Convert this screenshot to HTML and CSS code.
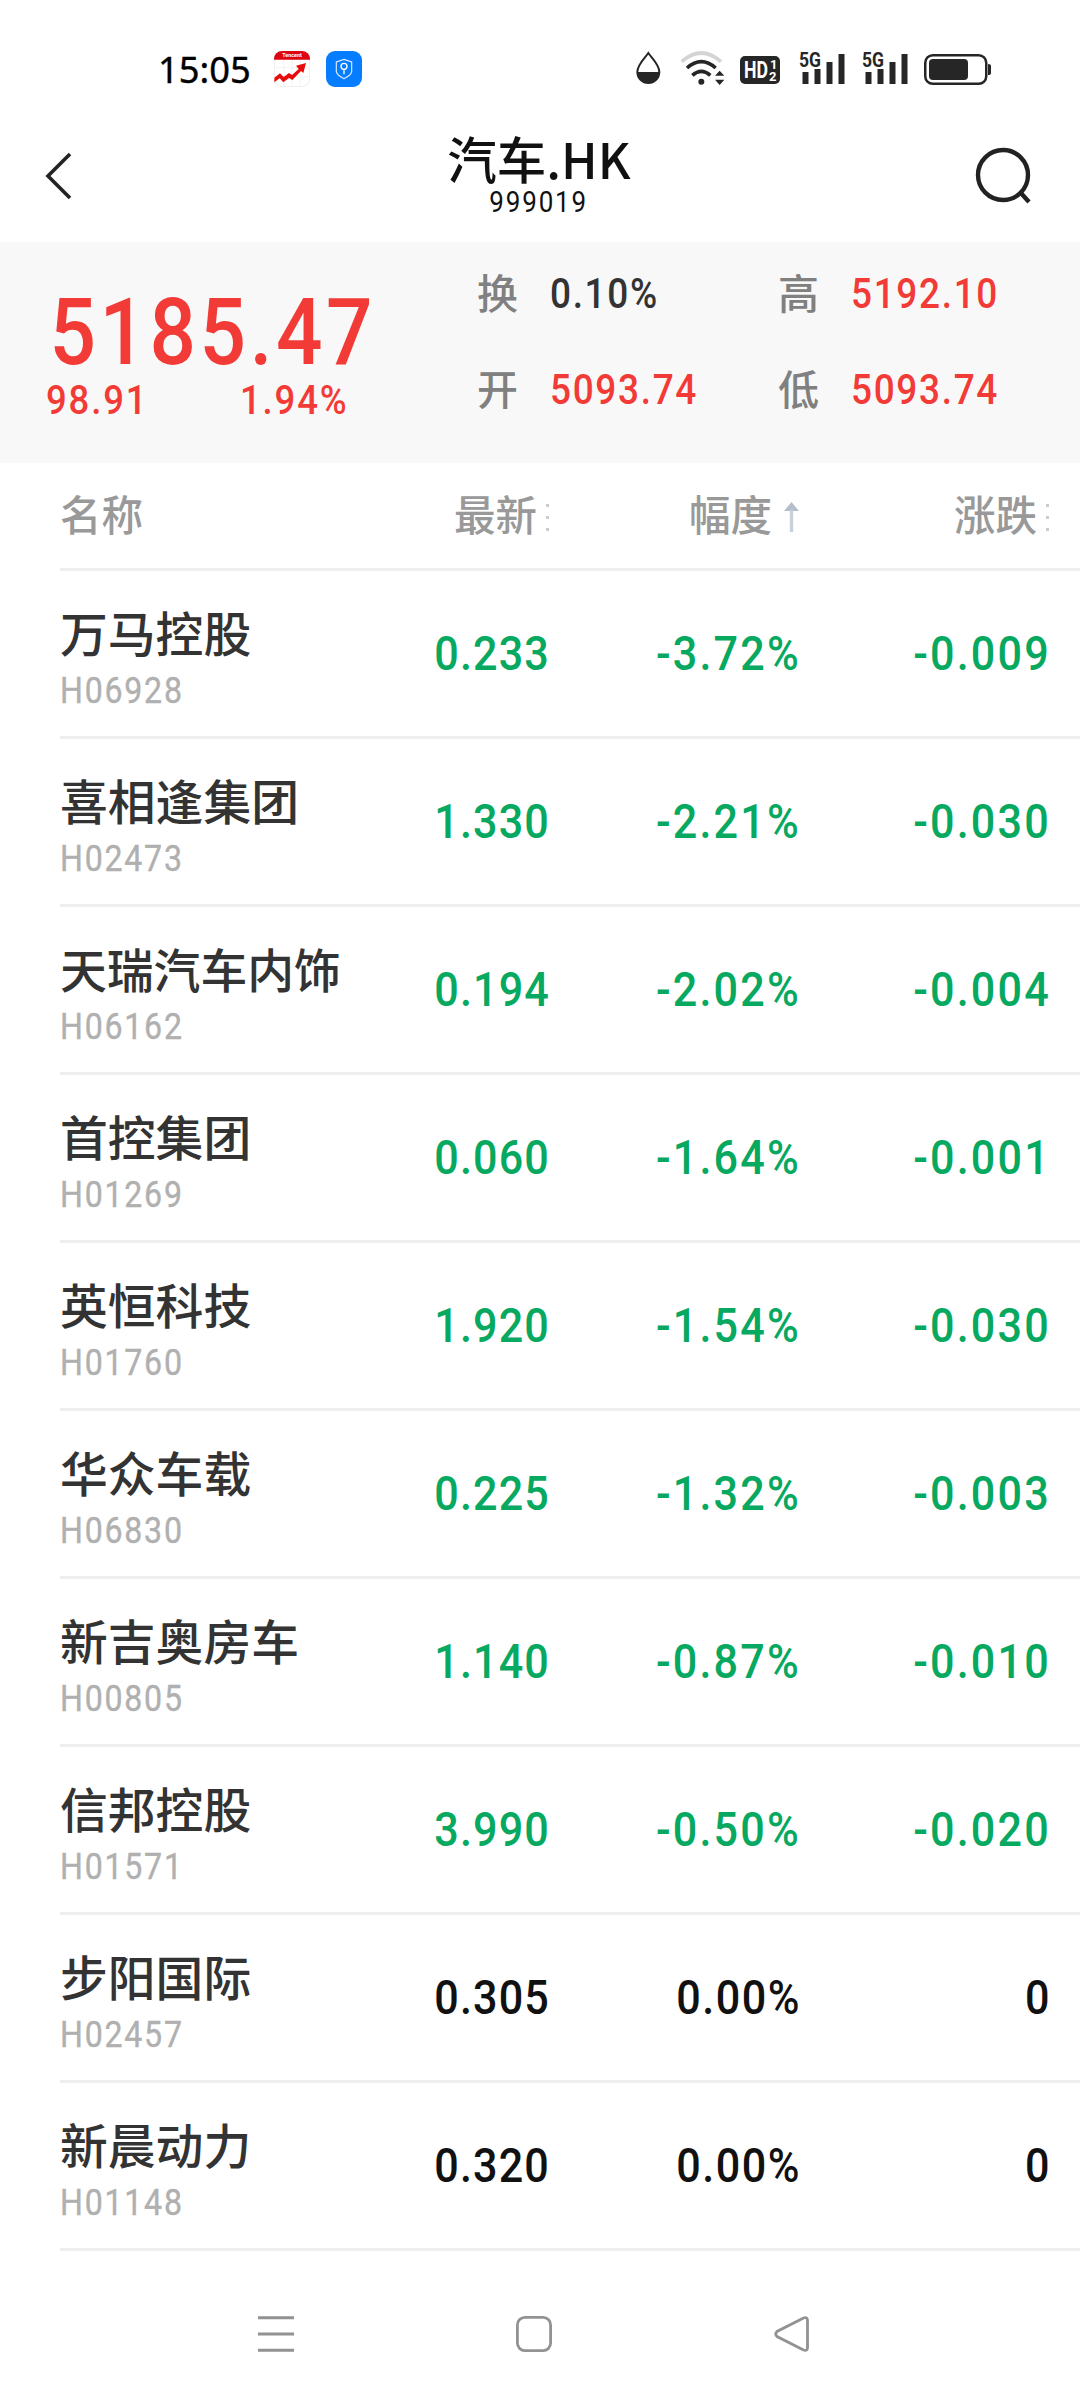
FILE: index.html
```html
<!DOCTYPE html>
<html lang="zh-CN">

<head>
    <meta charset="UTF-8">
    <title>汽车.HK</title>
    <meta name="viewport" content="width=device-width, initial-scale=1.0">
    <link rel="stylesheet" href="styles.css">
</head>

<body>
    <div class="status-bar">
        <span class="clock">15:05</span>
        <svg class="app-icon stock-app" width="36" height="36" viewBox="0 0 108 108">
            <rect x="1" y="1" width="106" height="106" rx="24" fill="#fff" stroke="#e6e6e6" stroke-width="2" />
            <path d="M30 25V106M54 25V106M79 25V106M2 50H106M2 77H106" stroke="#ededed" stroke-width="2" />
            <path d="M0 26V24A24 24 0 0 1 24 0H84A24 24 0 0 1 108 24V26Z" fill="#dc0510" />
            <text x="54" y="18" text-anchor="middle" class="app-label">Tencent</text>
            <path d="M1 94L1 80L18 67L29 78L45 66L54 72L74 54L66 44L96 36L88 66L81 60L55 87L45 81L28 94L17 82Z" fill="#e60c0c" />
        </svg>
        <svg class="app-icon" width="36" height="36" viewBox="0 0 108 108">
            <rect width="108" height="108" rx="27" fill="#067cff" />
            <path d="M54 25L77 33V62Q76 72 54 83Q32 72 31 62V33Z" fill="none" stroke="#d8eaff" stroke-width="3.5" />
            <circle cx="54" cy="46" r="9" fill="none" stroke="#fff" stroke-width="4" />
            <path d="M54 55V70" stroke="#fff" stroke-width="4" />
        </svg>

        <div class="status-right">
            <svg width="25" height="34" viewBox="50 67 75 102">
                <path d="M87 73C77 88 54 107 54 130A33 33 0 0 0 120 130C120 107 97 88 87 73Z" fill="#fff" stroke="#262626" stroke-width="6" />
                <path d="M54 130A33 33 0 0 0 120 130Z" fill="#262626" />
            </svg>
            <svg class="wifi" width="44" height="34" viewBox="184 63 132 102">
                <g fill="none" stroke="#262626" stroke-width="11">
                    <path d="M186 95Q245 43 304 95" stroke="#d4d4d4" />
                    <path d="M202 114Q245 76 288 114" />
                    <path d="M218 136Q245 112 272 136" />
                </g>
                <circle cx="245" cy="155" r="9" fill="#262626" />
                <path d="M286 137L300 122L314 137ZM286 149L300 165L314 149Z" fill="#262626" />
            </svg>
            <svg class="hd" width="40" height="28" viewBox="0 0 40 28">
                <rect width="40" height="28" rx="5" fill="#262626" />
                <text x="4" y="22" class="hd-text" textLength="24" lengthAdjust="spacingAndGlyphs">HD</text>
                <text x="30" y="13" class="hd-num">1</text>
                <text x="29" y="25" class="hd-num">2</text>
            </svg>
            <svg class="signal" width="46" height="36" viewBox="0 -3 46 36">
                <path d="M3.500 20h6v12h-6zM15.500 17h6v15h-6zM27.500 10h6v22h-6zM39.500 2h6v30h-6z" fill="#262626" />
                <text x="0" y="14.500" class="net-text" textLength="22" lengthAdjust="spacingAndGlyphs">5G</text>
            </svg>
            <svg class="signal second" width="46" height="36" viewBox="0 -3 46 36">
                <path d="M3.500 20h6v12h-6zM15.500 17h6v15h-6zM27.500 10h6v22h-6zM39.500 2h6v30h-6z" fill="#262626" />
                <text x="0" y="14.500" class="net-text" textLength="22" lengthAdjust="spacingAndGlyphs">5G</text>
            </svg>
            <svg class="battery" width="68" height="31" viewBox="0 0 68 31">
                <rect x="1.250" y="1.250" width="61" height="28.500" rx="7.500" fill="none" stroke="#262626" stroke-width="2.500" />
                <rect x="5" y="5" width="39" height="21" rx="4" fill="#262626" />
                <path d="M64 10Q67 10 67 12V19Q67 21 64 21Z" fill="#262626" />
            </svg>
        </div>
    </div>

    <div class="header">
        <svg class="back" width="30" height="50" viewBox="0 0 30 50">
            <path d="M26 3L4 25L26 47" fill="none" stroke="#222" stroke-width="3.600" />
        </svg>
        <div class="title">
            <h1>汽车.HK</h1>
            <div class="index-code">999019</div>
        </div>
        <svg class="search" width="58" height="60" viewBox="0 0 58 60">
            <circle cx="29" cy="29" r="25" fill="none" stroke="#222" stroke-width="4.400" />
            <path d="M46 46L55 56" stroke="#222" stroke-width="4.400" />
        </svg>
    </div>

    <div class="summary">
        <div class="price-block">
            <div class="price">5185.47</div>
            <div class="change"><span>98.91</span><span>1.94%</span></div>
        </div>
        <div class="stats">
            <span class="label">换</span><span class="stat dark">0.10%</span>
            <span class="label">高</span><span class="stat">5192.10</span>
            <span class="label">开</span><span class="stat">5093.74</span>
            <span class="label">低</span><span class="stat">5093.74</span>
        </div>
    </div>

    <div class="list">
        <div class="row list-head">
            <span>名称</span>
            <span class="col">最新<i class="dots"></i></span>
            <span class="col">幅度<svg class="arrow" width="15" height="30" viewBox="0 0 15 30">
                    <path d="M7.500 0L15 9H0Z" fill="#b4bfca" />
                    <path d="M7.500 8V30" stroke="#c8d0d9" stroke-width="3.400" />
                </svg></span>
            <span class="col">涨跌<i class="dots"></i></span>
        </div>
        <div class="row down">
            <div class="stock"><div class="name">万马控股</div><div class="code">H06928</div></div>
            <span class="col last">0.233</span><span class="col">-3.72%</span><span class="col">-0.009</span>
        </div>
        <div class="row down">
            <div class="stock"><div class="name">喜相逢集团</div><div class="code">H02473</div></div>
            <span class="col last">1.330</span><span class="col">-2.21%</span><span class="col">-0.030</span>
        </div>
        <div class="row down">
            <div class="stock"><div class="name long">天瑞汽车内饰</div><div class="code">H06162</div></div>
            <span class="col last">0.194</span><span class="col">-2.02%</span><span class="col">-0.004</span>
        </div>
        <div class="row down">
            <div class="stock"><div class="name">首控集团</div><div class="code">H01269</div></div>
            <span class="col last">0.060</span><span class="col">-1.64%</span><span class="col">-0.001</span>
        </div>
        <div class="row down">
            <div class="stock"><div class="name">英恒科技</div><div class="code">H01760</div></div>
            <span class="col last">1.920</span><span class="col">-1.54%</span><span class="col">-0.030</span>
        </div>
        <div class="row down">
            <div class="stock"><div class="name">华众车载</div><div class="code">H06830</div></div>
            <span class="col last">0.225</span><span class="col">-1.32%</span><span class="col">-0.003</span>
        </div>
        <div class="row down">
            <div class="stock"><div class="name">新吉奥房车</div><div class="code">H00805</div></div>
            <span class="col last">1.140</span><span class="col">-0.87%</span><span class="col">-0.010</span>
        </div>
        <div class="row down">
            <div class="stock"><div class="name">信邦控股</div><div class="code">H01571</div></div>
            <span class="col last">3.990</span><span class="col">-0.50%</span><span class="col">-0.020</span>
        </div>
        <div class="row">
            <div class="stock"><div class="name">步阳国际</div><div class="code">H02457</div></div>
            <span class="col last">0.305</span><span class="col">0.00%</span><span class="col">0</span>
        </div>
        <div class="row">
            <div class="stock"><div class="name">新晨动力</div><div class="code">H01148</div></div>
            <span class="col last">0.320</span><span class="col">0.00%</span><span class="col">0</span>
        </div>
    </div>

    <div class="nav-bar">
        <svg width="36" height="36" viewBox="0 0 36 36">
            <path d="M0 1.700H36M0 18H36M0 34.300H36" stroke="#929292" stroke-width="3" />
        </svg>
        <svg width="36" height="36" viewBox="0 0 36 36">
            <rect x="1.400" y="1.400" width="33.200" height="33.200" rx="7.500" fill="none" stroke="#929292" stroke-width="2.800" />
        </svg>
        <svg width="36" height="36" viewBox="0 0 36 36">
            <path d="M3 15.500Q0.500 18 3 20.500L29.500 34Q33.500 35.500 33.500 31.500V4.500Q33.500 0.500 29.500 2Z" fill="none" stroke="#929292" stroke-width="2.800" />
        </svg>
    </div>
</body>

</html>
```
FILE: styles.css
```css
* {
    box-sizing: border-box;
}

body {
    margin: 0;
    width: 1080px;
    height: 2400px;
    overflow: hidden;
    background: #fff;
    color: #111;
    font-family: Roboto, "Noto Sans CJK SC", sans-serif;
}

svg {
    display: block;
    flex: none;
}

/* status bar */
.status-bar {
    display: flex;
    height: 110px;
    padding: 51px 88px 0 158px;
}

.clock {
    width: 116px;
    font-family: "Noto Sans", sans-serif;
    font-size: 36.3px;
    line-height: 37px;
    color: #000;
    -webkit-text-stroke: 0.4px #000;
}

.app-icon {
    margin-right: 16px;
}

.app-label {
    font-size: 16px;
    font-weight: 700;
    fill: #fff;
}

.status-right {
    display: flex;
    margin-left: auto;
}

.wifi {
    margin-left: 20px;
}

.hd {
    margin: 5px 0 0 15px;
}

.hd-text {
    font-size: 23px;
    font-weight: 700;
    fill: #fff;
}

.hd-num {
    font-size: 13px;
    font-weight: 700;
    fill: #fff;
}

.signal {
    margin: -2px 0 0 19px;
}

.signal.second {
    margin-left: 17px;
}

.net-text {
    font-size: 20px;
    font-weight: 700;
    fill: #262626;
    stroke: #fff;
    stroke-width: 2px;
    paint-order: stroke;
}

.battery {
    margin: 3px 0 0 16px;
}

/* header */
.header {
    display: flex;
    justify-content: space-between;
    height: 132px;
    padding: 0 48px 0 44px;
}

.back {
    margin: 41px 28px 0 0;
}

.search {
    margin-top: 36px;
}

.title {
    padding: 23px 0 0 2px;
    text-align: center;
}

h1 {
    margin: 0;
    font-family: "Noto Sans CJK SC", sans-serif;
    font-size: 49.5px;
    font-weight: 500;
    line-height: 50px;
}

.index-code {
    margin-top: 4px;
    font-size: 29.5px;
    line-height: 30px;
    letter-spacing: 2.1px;
    transform: scaleX(0.88);
}

/* index summary */
.summary {
    display: flex;
    height: 221px;
    background: #f8f8f8;
    color: #f23a36;
}

.price-block {
    width: 477px;
    padding: 48px 0 0 46px;
}

.price {
    padding-left: 4px;
    font-size: 93px;
    font-weight: 500;
    line-height: 86px;
    letter-spacing: 4px;
    transform: scaleX(0.88);
    transform-origin: left;
}

.change {
    display: grid;
    grid-template-columns: 194px 160px;
    font-size: 41.5px;
    font-weight: 500;
    line-height: 48px;
    letter-spacing: 2.1px;
}

.change span {
    transform: scaleX(0.88);
    transform-origin: left;
}

.stats {
    display: grid;
    grid-template-columns: 73px 228px 73px 228px;
    grid-template-rows: 96px 96px;
    padding-top: 3px;
    align-items: center;
}

.label {
    margin-top: -5px;
    font-size: 41px;
    font-weight: 500;
    color: #808080;
}

.stat {
    font-size: 42px;
    font-weight: 500;
    letter-spacing: 1.9px;
    transform: scaleX(0.88);
    transform-origin: left;
}

.dark {
    color: #333;
}

/* stock list */
.row {
    display: grid;
    grid-template-columns: 239px 250px 250px 250px;
    height: 168px;
    margin-left: 60px;
    border-bottom: 3px solid #eee;
    font-size: 49px;
    font-weight: 500;
}

.col {
    display: flex;
    justify-content: flex-end;
    margin-right: -2px;
    line-height: 166px;
    letter-spacing: 1.7px;
    transform: scaleX(0.88);
    transform-origin: right;
}

.down .col {
    letter-spacing: 2.5px;
    color: #07a85f;
}

.row .last {
    margin-right: -1px;
    letter-spacing: 1.3px;
}

.name {
    padding-top: 34px;
    font-size: 47.8px;
    line-height: 62px;
    white-space: nowrap;
    color: #333;
}

.name.long {
    font-size: 46.8px;
}

.code {
    margin-top: 1px;
    font-size: 36.5px;
    font-weight: 400;
    line-height: 45px;
    letter-spacing: 2px;
    color: #b0b0b0;
    transform: scaleX(0.88);
    transform-origin: left;
    -webkit-text-stroke: 0.4px #b0b0b0;
}

.list-head {
    height: 108px;
    padding-top: 3px;
    align-items: center;
    font-size: 41.5px;
    line-height: 60px;
    color: #999;
}

.list-head .col {
    align-items: center;
    margin-right: 0;
    line-height: 60px;
    letter-spacing: 0;
    transform: none;
}

.dots {
    width: 3px;
    height: 27px;
    margin-left: 9px;
    background: repeating-linear-gradient(#c6cdd5 0 3px, transparent 3px 12px);
}

.arrow {
    margin-left: 12px;
}

/* system navigation */
.nav-bar {
    display: flex;
    justify-content: space-between;
    padding: 65px 270px 0 258px;
}
```
